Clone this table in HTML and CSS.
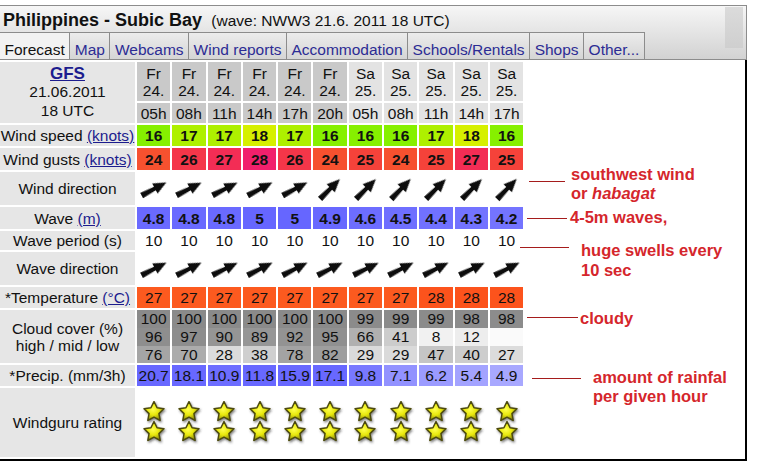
FILE: index.html
```html
<!DOCTYPE html>
<html lang="en">
  <head>
    <meta charset="UTF-8" />
    <meta name="viewport" content="width=device-width, initial-scale=1.0" />
    <title>Windguru - Philippines - Subic Bay</title>
    <link rel="stylesheet" href="styles.css">
  </head>
  <body>
    <div class="wg">
      <div class="wg-head">
        <div class="head-main">
          <div class="title"><b>Philippines - Subic Bay</b> <span class="model">(wave: NWW3 21.6. 2011 18 UTC)</span></div>
          <ul class="tabs">
            <li class="on">Forecast</li>
            <li>Map</li>
            <li>Webcams</li>
            <li>Wind reports</li>
            <li>Accommodation</li>
            <li>Schools/Rentals</li>
            <li>Shops</li>
            <li>Other...</li>
          </ul>
        </div>
        <div class="corner"></div>
      </div>

      <div class="wg-body">
        <table class="fc">
          <colgroup>
            <col class="c-lab" />
            <col class="c-d" span="11" />
          </colgroup>
          <tbody id="rows"></tbody>
        </table>

        <!-- hand drawn comments on top of the forecast -->
        <div class="note n-wind"><span class="rule"></span><span>southwest wind<br>or <i>habagat</i></span></div>
        <div class="note n-wave"><span class="rule"></span><span>4-5m waves,</span></div>
        <div class="note n-swell"><span class="rule"></span><span>huge swells every<br>10 sec</span></div>
        <div class="note n-cloud"><span class="rule"></span><span>cloudy</span></div>
        <div class="note n-rain"><span class="rule"></span><span>amount of rainfal<br>per given hour</span></div>
      </div>
    </div>

    <svg class="defs" width="0" height="0" aria-hidden="true">
      <defs>
        <filter id="soft" x="-30%" y="-30%" width="160%" height="160%">
          <feGaussianBlur stdDeviation="0.6" />
        </filter>
        <filter id="shade" x="-40%" y="-40%" width="180%" height="180%">
          <feDropShadow dx="1" dy="1.5" stdDeviation="1" flood-color="#333" flood-opacity="0.6" />
        </filter>
        <radialGradient id="gold" cx="45%" cy="42%" r="58%">
          <stop offset="0" stop-color="#ffff50" />
          <stop offset="0.5" stop-color="#e8e80c" />
          <stop offset="1" stop-color="#8e8c06" />
        </radialGradient>
        <g id="arrow" filter="url(#soft)" fill="#111">
          <polygon points="-14,-2.9 4,-1.8 4,1.8 -14,2.9" />
          <polygon points="1,-5.8 14,0 1,5.8" />
        </g>
        <g id="star" filter="url(#shade)">
          <polygon points="0,-10.5 3.06,-4.21 10,-3.25 4.95,1.61 6.2,8.5 0,5.2 -6.2,8.5 -4.95,1.61 -10,-3.25 -3.06,-4.21"
            fill="url(#gold)" stroke="#4e4c10" stroke-width="1.5" stroke-linejoin="round" />
        </g>
      </defs>
    </svg>

    <script>
      const fc = {
        day: ["Fr", "Fr", "Fr", "Fr", "Fr", "Fr", "Sa", "Sa", "Sa", "Sa", "Sa"],
        date: ["24.", "24.", "24.", "24.", "24.", "24.", "25.", "25.", "25.", "25.", "25."],
        hour: ["05h", "08h", "11h", "14h", "17h", "20h", "05h", "08h", "11h", "14h", "17h"],
        speed: [16, 17, 17, 18, 17, 16, 16, 16, 17, 18, 16],
        gust: [24, 26, 27, 28, 26, 24, 25, 24, 25, 27, 25],
        windDir: [28, 27, 27, 28, 28, 45, 45, 46, 45, 45, 46],
        wave: [4.8, 4.8, 4.8, 5, 5, 4.9, 4.6, 4.5, 4.4, 4.3, 4.2],
        period: [10, 10, 10, 10, 10, 10, 10, 10, 10, 10, 10],
        waveDir: [27, 27, 26, 27, 27, 27, 26, 27, 27, 26, 27],
        temp: [27, 27, 27, 27, 27, 27, 27, 27, 28, 28, 28],
        cloudHigh: [100, 100, 100, 100, 100, 100, 99, 99, 99, 98, 98],
        cloudMid: [96, 97, 90, 89, 92, 95, 66, 41, 8, 12, null],
        cloudLow: [76, 70, 28, 38, 78, 82, 29, 29, 47, 40, 27],
        rain: [20.7, 18.1, 10.9, 11.8, 15.9, 17.1, 9.8, 7.1, 6.2, 5.4, 4.9],
        stars: [2, 2, 2, 2, 2, 2, 2, 2, 2, 2, 2]
      };

      const speedBg = { 16: "#86f000", 17: "#aef000", 18: "#d6f000" };
      const gustBg = { 24: "#f6512f", 25: "#f5423a", 26: "#f43649", 27: "#f32d55", 28: "#f1206c" };
      const tempBg = { 27: "#fc5a1f", 28: "#fc531c" };

      function grey(v) {
        const g = Math.round(250 - (v || 0) * 1.12);
        return `rgb(${g},${g},${g})`;
      }
      function waveBg(v) {
        const c = Math.round(102 + (5 - v) * 18);
        return `rgb(${c},${c},255)`;
      }
      function rainBg(v) {
        const c = Math.max(104, Math.min(235, Math.round(216 - v * 9.8)));
        return `rgb(${c},${c},255)`;
      }

      const td = (html, bg, cls) =>
        `<td${cls ? ` class="${cls}"` : ""}${bg ? ` style="background:${bg}"` : ""}>${html}</td>`;
      const lab = (html, extra = "") => `<td class="lab"${extra}>${html}</td>`;
      const dayCls = (i) => (fc.day[i] === "Fr" ? "fr" : "sa");

      function arrow(a) {
        return `<svg class="dir" viewBox="-17 -16 34 32"><use href="#arrow" transform="rotate(${-a})" /></svg>`;
      }
      function stars(n) {
        let s = "";
        for (let i = n - 1; i >= 0; i--) s += `<use href="#star" x="15" y="${11 + i * 20}" />`;
        return `<svg class="stars" viewBox="0 0 30 44">${s}</svg>`;
      }

      let html = "";
      function row(cls, label, cells) {
        html += `<tr class="${cls}">${label}${cells.join("")}</tr>`;
      }

      row("r-date", lab('<a href="#" class="gfs">GFS</a><br>21.06.2011<br>18 UTC', ' rowspan="2"'),
        fc.day.map((d, i) => td(`${d}<br>${fc.date[i]}`, null, dayCls(i))));
      row("r-hour", "", fc.hour.map((h, i) => td(h, null, dayCls(i))));
      row("r-speed", lab('Wind speed <a href="#">(knots)</a>'), fc.speed.map((v) => td(v, speedBg[v], "b")));
      row("r-gust", lab('Wind gusts <a href="#">(knots)</a>'), fc.gust.map((v) => td(v, gustBg[v], "b")));
      row("r-wdir", lab("Wind direction"), fc.windDir.map((a) => td(arrow(a))));
      row("r-wave", lab('Wave <a href="#">(m)</a>'), fc.wave.map((v) => td(v, waveBg(v), "b")));
      row("r-period", lab("Wave period (s)"), fc.period.map((v) => td(v)));
      row("r-wvdir", lab("Wave direction"), fc.waveDir.map((a) => td(arrow(a))));
      row("r-temp", lab('*Temperature <a href="#">(°C)</a>'), fc.temp.map((v) => td(v, tempBg[v])));
      row("r-cloud", lab("Cloud cover (%)<br>high / mid / low", ' class="lab two"'),
        fc.cloudHigh.map((h, i) => {
          const parts = [h, fc.cloudMid[i], fc.cloudLow[i]]
            .map((v) => `<div style="background:${grey(v)}">${v === null ? "" : v}</div>`)
            .join("");
          return `<td class="cloud">${parts}</td>`;
        }));
      row("r-rain", lab("*Precip. (mm/3h)"), fc.rain.map((v) => td(v, rainBg(v))));
      row("r-rate", lab("Windguru rating"), fc.stars.map((n) => td(stars(n))));

      document.getElementById("rows").innerHTML = html;
    </script>
  </body>
</html>
```

FILE: styles.css
```css
body {
  margin: 0;
  font-family: "Liberation Sans", Arial, sans-serif;
  font-size: 15.5px;
  color: #111;
  background: #fff;
}
a {
  color: #1c1c8e;
}
.defs {
  display: block;
  width: 0;
  height: 0;
}

.wg {
  width: 747px;
  margin-top: 5px;
}

/* header: title + tabs */
.wg-head {
  display: flex;
  height: 53px;
  border: 1px solid #8c8c8c;
  border-left: 0;
  background: linear-gradient(#f6f6f6, #d2d2d2);
}
.head-main {
  flex: 1;
  display: flex;
  flex-direction: column;
}
.title {
  height: 25px;
  padding: 1px 0 0 3px;
  line-height: 26px;
  white-space: nowrap;
}
.title b {
  font-size: 18px;
}
.title .model {
  margin-left: 5px;
}
.corner {
  width: 18px;
  margin: 1px 3px 11px 0;
  background: linear-gradient(#dbdbdb, #cfcfcf);
}
.tabs {
  display: flex;
  margin: 0;
  padding: 0;
  list-style: none;
  height: 27px;
}
.tabs li {
  border: 1px solid #8c8c8c;
  border-width: 1px 1px 0 0;
  padding: 7px 4.5px 0;
  line-height: 19px;
  color: #2c2c94;
  background: linear-gradient(#ececec, #d5d5d5);
  white-space: nowrap;
}
.tabs li.on {
  color: #111;
  background: #f2f2f2;
}

/* forecast table */
.wg-body {
  position: relative;
  border-right: 2px solid #000;
  border-bottom: 2px solid #000;
}
.fc {
  border-spacing: 2px;
  margin-left: -2px;
  table-layout: fixed;
  width: 527.3px;
}
.fc .c-lab {
  width: 135px;
}
.fc .c-d {
  width: 33.3px;
}
.fc td {
  padding: 0;
  text-align: center;
  line-height: 17px;
  white-space: nowrap;
}
.fc td.lab {
  background: #e6e6e6;
}
.fc td.two {
  line-height: 19px;
}
.fc td[rowspan] {
  line-height: 18.5px;
}
.gfs {
  font-size: 17px;
  font-weight: bold;
}
.fc .fr {
  background: #c9c9c9;
}
.fc .sa {
  background: #e3e3e3;
}
.fc .b {
  font-weight: bold;
}
.cloud div {
  height: 18px;
  line-height: 18px;
}
.cloud div:last-child {
  height: 17px;
}
.dir {
  display: block;
  width: 34px;
  height: 32px;
  margin: 0 auto;
}
.stars {
  display: block;
  width: 30px;
  height: 44px;
  margin: 0 auto;
}

.r-date { height: 39px; }
.r-hour { height: 20px; }
.r-speed { height: 21px; }
.r-gust { height: 22px; }
.r-wdir { height: 33px; }
.r-wave { height: 22px; }
.r-period { height: 19px; }
.r-wvdir { height: 33px; }
.r-temp { height: 21px; }
.r-cloud { height: 53px; }
.r-rain { height: 21px; }
.r-rate { height: 69px; }

/* red comments */
.note {
  position: absolute;
  display: flex;
  align-items: flex-start;
  color: #d5262c;
  font-weight: bold;
  font-size: 16.5px;
  line-height: 19px;
  white-space: nowrap;
}
.note .rule {
  border-top: 1.5px solid #a51c1c;
}
.n-wind { left: 529px; top: 104.5px; }
.n-wind .rule { width: 36px; margin: 16.5px 6px 0 0; }
.n-wave { left: 527px; top: 147.5px; }
.n-wave .rule { width: 40px; margin: 10.5px 3px 0 0; }
.n-swell { left: 520px; top: 180px; line-height: 20px; }
.n-swell .rule { width: 49px; margin: 7px 12px 0 0; }
.n-cloud { left: 527px; top: 248.5px; }
.n-cloud .rule { width: 51px; margin: 8.5px 2px 0 0; }
.n-rain { left: 532px; top: 307.5px; }
.n-rain .rule { width: 49px; margin: 10.5px 12px 0 0; }
```
